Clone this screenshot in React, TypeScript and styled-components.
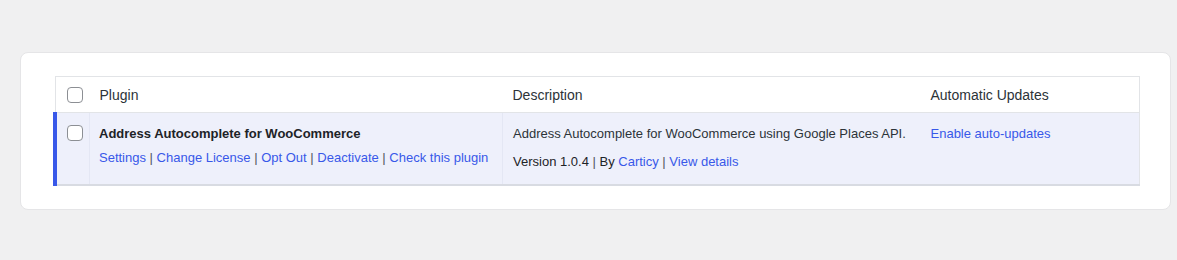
import React from 'react'
import styled, { createGlobalStyle } from 'styled-components';

const GlobalStyle = createGlobalStyle`
  body {
    margin: 0;
    background: #f0f0f1;
    font-family: "Liberation Sans", Arial, sans-serif;
    color: #1d2327;
  }
`;

const Page = styled.div`
  padding: 52px 6px 50px 20px;
`;

const Card = styled.div`
  background: #fff;
  border: 1px solid #e5e5e7;
  border-radius: 8px;
  padding: 23px 30px 23px 32px;
`;

const Table = styled.table`
  width: 100%;
  border-collapse: collapse;
  border: 1px solid #e2e4e7;
  border-bottom: 2px solid #d8dbe2;
  table-layout: fixed;
  font-size: 13px;
`;

const HeadCell = styled.th<{ $w?: number; $flush?: boolean }>`
  text-align: left;
  font-weight: 400;
  font-size: 14px;
  color: #2c3338;
  height: 35px;
  padding: ${p => (p.$flush ? '0' : '0 10px')};
  border-bottom: 1px solid #e2e4e7;
  width: ${p => (p.$w ? p.$w + 'px' : 'auto')};
  vertical-align: middle;
`;

const Row = styled.tr`
  background: #eef0fb;
`;

const CheckCell = styled.td<{ $active?: boolean }>`
  padding: 0;
  vertical-align: top;
  border-left: ${p => (p.$active ? '4px solid #3858e9' : 'none')};
  border-right: 1px solid #e4e7f4;
`;

const Cell = styled.td<{ $divider?: boolean }>`
  vertical-align: top;
  padding: 11px 10px 12px 10px;
  border-right: ${p => (p.$divider ? '1px solid #e4e7f4' : 'none')};
  line-height: 20px;
`;

const Box = styled.span<{ $top?: number; $left: number }>`
  display: block;
  width: 16px;
  height: 16px;
  box-sizing: border-box;
  border: 1px solid #8c8f94;
  border-radius: 4px;
  background: #fff;
  margin: ${p => p.$top ?? 0}px 0 0 ${p => p.$left}px;
`;

const Name = styled.div`
  font-weight: 700;
  color: #1d2327;
  margin-left: -1px;
`;

const Actions = styled.div`
  margin-top: 4px;
  margin-left: -1px;
  color: #50575e;
`;

const A = styled.a`
  color: #3858e9;
  text-decoration: none;
`;

const Sep = styled.span`
  color: #50575e;
`;

const Desc = styled.div`
  color: #2c3338;
`;

const Meta = styled.div`
  margin-top: 8px;
  color: #1d2327;
`;

const actions = ['Settings', 'Change License', 'Opt Out', 'Deactivate', 'Check this plugin'];

const App: React.FC = () => {
  return (
    <Page>
      <GlobalStyle />
      <Card>
        <Table>
          <thead>
            <tr>
              <HeadCell $w={34} $flush><Box $left={11} /></HeadCell>
              <HeadCell $w={393}>Plugin</HeadCell>
              <HeadCell $w={398}>Description</HeadCell>
              <HeadCell>Automatic Updates</HeadCell>
            </tr>
          </thead>
          <tbody>
            <Row>
              <CheckCell $active><Box $top={12} $left={10} /></CheckCell>
              <Cell $divider>
                <Name>Address Autocomplete for WooCommerce</Name>
                <Actions>
                  {actions.map((a, i) => (
                    <React.Fragment key={a}>
                      {i > 0 && <Sep> | </Sep>}
                      <A href="#">{a}</A>
                    </React.Fragment>
                  ))}
                </Actions>
              </Cell>
              <Cell>
                <Desc>Address Autocomplete for WooCommerce using Google Places API.</Desc>
                <Meta>
                  Version 1.0.4<Sep> | </Sep>By <A href="#">Carticy</A><Sep> | </Sep><A href="#">View details</A>
                </Meta>
              </Cell>
              <Cell>
                <A href="#">Enable auto-updates</A>
              </Cell>
            </Row>
          </tbody>
        </Table>
      </Card>
    </Page>
  )
}

export default App;
